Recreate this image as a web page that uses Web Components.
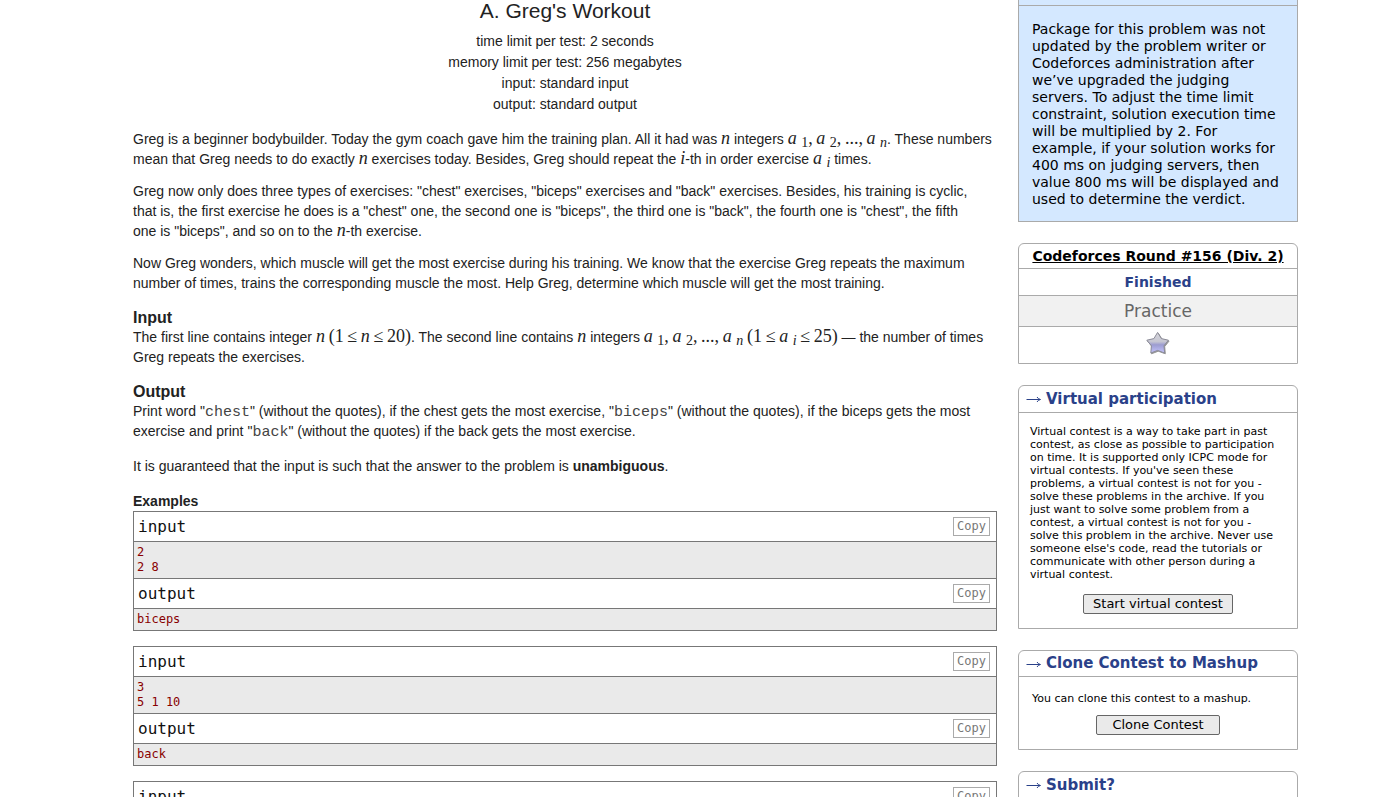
<!DOCTYPE html>
<html lang="en">
<head>
<meta charset="utf-8">
<title>Problem - A. Greg's Workout</title>
<style>
html, body { margin: 0; height: 100%; overflow: hidden; background: #fff; }
body { font-family: "DejaVu Sans", Verdana, sans-serif; color: #000; }
</style>
</head>
<body>
<problem-page>
  <problem-statement slot="main">
    <sample-test>
      <pre slot="input">2
2 8</pre>
      <pre slot="output">biceps</pre>
    </sample-test>
    <sample-test>
      <pre slot="input">3
5 1 10</pre>
      <pre slot="output">back</pre>
    </sample-test>
    <sample-test></sample-test>
  </problem-statement>
  <notice-box slot="side">Package for this problem was not updated by the problem writer or Codeforces administration after we’ve upgraded the judging servers. To adjust the time limit constraint, solution execution time will be multiplied by 2. For example, if your solution works for 400 ms on judging servers, then value 800 ms will be displayed and used to determine the verdict.</notice-box>
  <contest-info slot="side"></contest-info>
  <side-box slot="side" action="Start virtual contest">
    <span slot="caption">Virtual participation</span>
    Virtual contest is a way to take part in past contest, as close as possible to participation on time. It is supported only ICPC mode for virtual contests. If you've seen these problems, a virtual contest is not for you - solve these problems in the archive. If you just want to solve some problem from a contest, a virtual contest is not for you - solve this problem in the archive. Never use someone else's code, read the tutorials or communicate with other person during a virtual contest.
  </side-box>
  <side-box slot="side" action="Clone Contest" compact>
    <span slot="caption">Clone Contest to Mashup</span>
    You can clone this contest to a mashup.
  </side-box>
  <side-box slot="side">
    <span slot="caption">Submit?</span>
  </side-box>
</problem-page>

<script>
class BaseElement extends HTMLElement {
  constructor() {
    super();
    this.attachShadow({ mode: "open" }).innerHTML = this.constructor.markup;
  }
}

class ProblemPage extends BaseElement {
  static markup = `
    <style>
      :host { display: grid; grid-template-columns: minmax(0, 1fr) 280px; column-gap: 21px; padding: 0 94px 0 133px; align-items: start; }
      aside { display: flex; flex-direction: column; gap: 21px; }
    </style>
    <main><slot name="main"></slot></main>
    <aside><slot name="side"></slot></aside>`;
}

class ProblemStatement extends BaseElement {
  static markup = `
    <style>
      :host { display: block; font: 14px/20px "Liberation Sans", Arial, sans-serif; color: #222; }
      header { text-align: center; line-height: 21px; margin-bottom: 14px; }
      h1 { font-size: 21px; font-weight: 400; line-height: 31px; margin: -5px 0 5px; }
      p { margin: 0 0 12px; }
      .inset { padding-right: 16px; }
      h2 { font-size: 16px; line-height: 19px; margin: 15px 0 0; }
      h3 { font-size: 14px; line-height: 20px; margin: 15px 0 0; }
      .last { margin: 15px 0 0; }
      .t { font-family: "Liberation Serif", "Times New Roman", serif; font-size: 18px; line-height: 17px; white-space: nowrap; }
      sub { font-size: 14px; line-height: 12px; vertical-align: -3px; }
      code { font-family: "Liberation Mono", "Courier New", monospace; font-size: 15px; line-height: 15px; color: #444; }
      .samples { display: flex; flex-direction: column; gap: 15px; }
    </style>
    <header>
      <h1>A. Greg's Workout</h1>
      <div>time limit per test: 2 seconds</div>
      <div>memory limit per test: 256 megabytes</div>
      <div>input: standard input</div>
      <div>output: standard output</div>
    </header>
    <p>Greg is a beginner bodybuilder. Today the gym coach gave him the training plan. All it had was <span class="t"><i>n</i></span> integers <span class="t"><i>a</i> <sub>1</sub>,&#8201;<i>a</i> <sub>2</sub>,&#8201;...,&#8201;<i>a</i> <sub><i>n</i></sub></span>. These numbers mean that Greg needs to do exactly <span class="t"><i>n</i></span> exercises today. Besides, Greg should repeat the <span class="t"><i>i</i></span>-th in order exercise <span class="t"><i>a</i> <sub><i>i</i></sub></span> times.</p>
    <p class="inset">Greg now only does three types of exercises: "chest" exercises, "biceps" exercises and "back" exercises. Besides, his training is cyclic, that is, the first exercise he does is a "chest" one, the second one is "biceps", the third one is "back", the fourth one is "chest", the fifth one is "biceps", and so on to the <span class="t"><i>n</i></span>-th exercise.</p>
    <p class="inset">Now Greg wonders, which muscle will get the most exercise during his training. We know that the exercise Greg repeats the maximum number of times, trains the corresponding muscle the most. Help Greg, determine which muscle will get the most training.</p>
    <h2>Input</h2>
    <div>The first line contains integer <span class="t"><i>n</i></span> <span class="t">(1&#8201;≤&#8201;<i>n</i>&#8201;≤&#8201;20)</span>. The second line contains <span class="t"><i>n</i></span> integers <span class="t"><i>a</i> <sub>1</sub>,&#8201;<i>a</i> <sub>2</sub>,&#8201;...,&#8201;<i>a</i> <sub><i>n</i></sub></span> <span class="t">(1&#8201;≤&#8201;<i>a</i> <sub><i>i</i></sub>&#8201;≤&#8201;25)</span> — the number of times Greg repeats the exercises.</div>
    <h2>Output</h2>
    <div>Print word "<code>chest</code>" (without the quotes), if the chest gets the most exercise, "<code>biceps</code>" (without the quotes), if the biceps gets the most exercise and print "<code>back</code>" (without the quotes) if the back gets the most exercise.</div>
    <p class="last">It is guaranteed that the input is such that the answer to the problem is <b>unambiguous</b>.</p>
    <h3>Examples</h3>
    <div class="samples"><slot></slot></div>`;
}

class SampleTest extends BaseElement {
  static markup = `
    <style>
      :host { display: block; border: 1px solid #777; font-family: "DejaVu Sans Mono", monospace; }
      .title { display: flex; align-items: center; justify-content: space-between; height: 29px; padding: 0 6px 0 4px; font-size: 16px; color: #111; border-bottom: 1px solid #777; }
      .data { background: #eaeaea; }
      .data.in { border-bottom: 1px solid #777; }
      button { box-sizing: border-box; height: 19px; padding: 0 3px; border: 1px solid #aaa; background: #fff; color: #777; font: 12px/17px "DejaVu Sans Mono", monospace; }
      ::slotted(pre) { margin: 0; padding: 3px; font: 12px/15px "DejaVu Sans Mono", monospace; color: #800; }
    </style>
    <div class="title">input<button type="button">Copy</button></div>
    <div class="data in"><slot name="input"></slot></div>
    <div class="title">output<button type="button">Copy</button></div>
    <div class="data"><slot name="output"></slot></div>`;
}

class NoticeBox extends BaseElement {
  static markup = `
    <style>
      :host { display: block; border: 1px solid #aaa; border-top: 0; background: #d4e8ff; font-size: 14px; line-height: 17px; }
      .caption { height: 5px; border-bottom: 1px solid #aaa; }
      .text { padding: 15px 13px 13px; }
    </style>
    <div class="caption"></div>
    <div class="text"><slot></slot></div>`;
}

class ContestInfo extends BaseElement {
  static markup = `
    <style>
      :host { display: block; border: 1px solid #aaa; border-radius: 6px 6px 0 0; text-align: center; }
      .row { display: flex; align-items: center; justify-content: center; }
      .row + .row { border-top: 1px solid #aaa; }
      .name { height: 24px; font-size: 14px; font-weight: 700; }
      a { color: #000; text-decoration: underline; white-space: nowrap; }
      .state { height: 26px; font-size: 14px; font-weight: 700; color: #2a4189; }
      .kind { height: 30px; font-size: 17px; color: #666; background: #f1f1f1; }
      .fav { height: 36px; }
      button { display: flex; padding: 0 0 4px; border: 0; background: none; }
    </style>
    <div class="row name"><a href="#contest">Codeforces Round #156 (Div. 2)</a></div>
    <div class="row state">Finished</div>
    <div class="row kind">Practice</div>
    <div class="row fav"><button type="button" aria-label="Add to favourites">
      <svg width="24" height="24" viewBox="0 0 24 24">
        <defs><linearGradient id="g" x1="0" y1="0" x2="0" y2="1">
          <stop offset="0" stop-color="#d6d6dc"/><stop offset=".45" stop-color="#c6c6d2"/>
          <stop offset=".6" stop-color="#9c9cd0"/><stop offset="1" stop-color="#c4c4fc"/>
        </linearGradient></defs>
        <path d="M11.6 1.4 L15.4 7.6 L22.4 9.2 L18 14.8 L18.6 22 L11.6 19.4 L4.8 22 L5.4 14.8 L.8 9.2 L7.9 7.6 Z" transform="translate(.7 .8)" fill="#555" opacity=".6" stroke="#555" stroke-linejoin="round"/>
        <path d="M11.6 1.4 L15.4 7.6 L22.4 9.2 L18 14.8 L18.6 22 L11.6 19.4 L4.8 22 L5.4 14.8 L.8 9.2 L7.9 7.6 Z" fill="url(#g)" stroke="#8c8c98" stroke-linejoin="round"/>
      </svg></button></div>`;
}

class SideBox extends BaseElement {
  static markup = `
    <style>
      :host { display: block; border: 1px solid #aaa; border-radius: 6px 6px 0 0; }
      h2 { margin: 0; padding: 0 7px; height: 26px; line-height: 26px; font-size: 15px; color: #2a4189; border-bottom: 1px solid #aaa; white-space: nowrap; display: flex; gap: 4px; }
      :host([compact]) h2 { height: 25px; line-height: 25px; }
      .arrow { display: flex; align-items: center; }
      .text { padding: 12px 16px 0 11px; font-size: 11px; line-height: 13px; }
      .foot { display: flex; justify-content: center; padding: 13px 0 14px; }
      :host([compact]) .text { padding: 15px 13px 0; }
      :host([compact]) .foot { padding-top: 10px; }
      button { box-sizing: border-box; height: 20px; padding: 0 9px; border: 1px solid #666; border-radius: 2px; background: #eaeaea; color: #000; font: 13px/18px "DejaVu Sans", Verdana, sans-serif; }
      :host([compact]) button { padding: 0 15px; }
    </style>
    <h2><span class="arrow"><svg width="16" height="10" viewBox="0 0 16 10" fill="none" stroke="#2a4189"><path d="M.5 5.5H14M11 3Q12 5 14.5 5.5Q12 6 11 8"/></svg></span><slot name="caption"></slot></h2>
    <div class="text"><slot></slot></div>
    <div class="foot"><button type="button"></button></div>`;
  connectedCallback() {
    const action = this.getAttribute("action");
    const foot = this.shadowRoot.querySelector(".foot");
    if (action) foot.firstChild.textContent = action;
    else foot.remove();
  }
}

customElements.define("problem-page", ProblemPage);
customElements.define("problem-statement", ProblemStatement);
customElements.define("sample-test", SampleTest);
customElements.define("notice-box", NoticeBox);
customElements.define("contest-info", ContestInfo);
customElements.define("side-box", SideBox);
</script>
</body>
</html>
